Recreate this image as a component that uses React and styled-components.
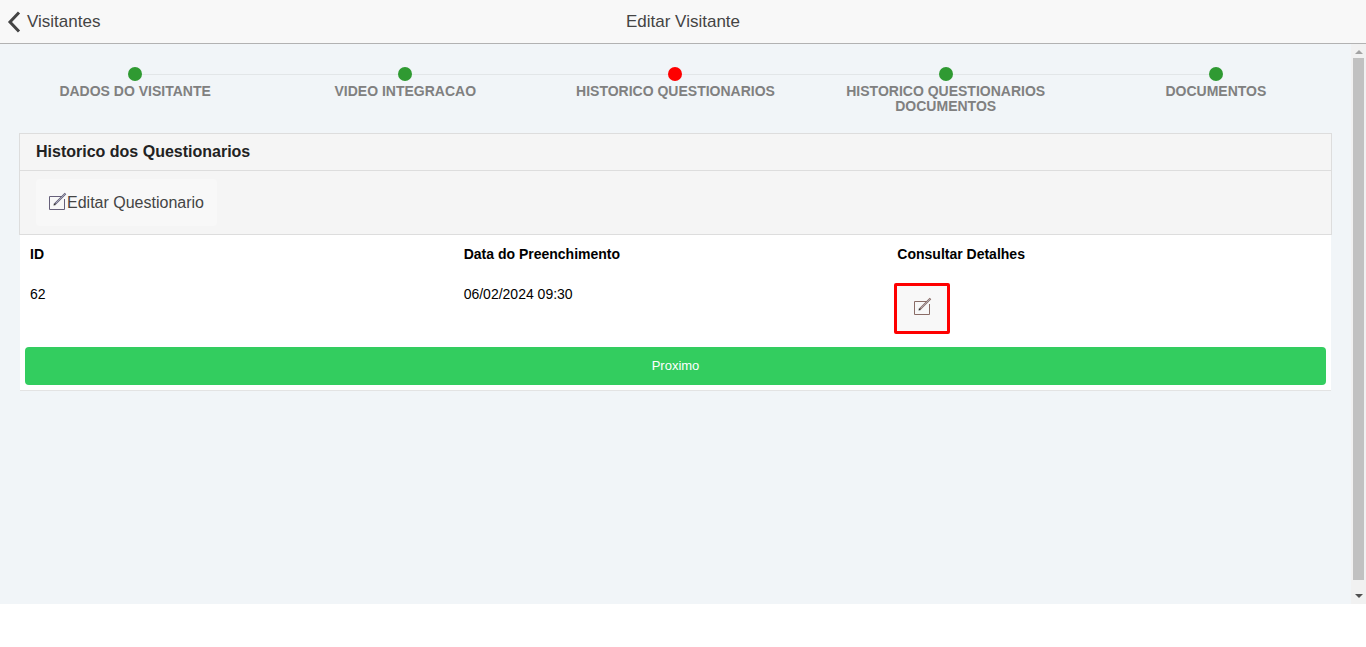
import React from "react";
import styled, { createGlobalStyle } from "styled-components";

const GlobalStyle = createGlobalStyle`
  html, body {
    margin: 0;
    padding: 0;
    height: 100%;
    background: #fff;
    overflow: hidden;
    font-family: "Liberation Sans", Arial, sans-serif;
  }
`;

const Page = styled.div`
  height: 604px;
  display: flex;
  flex-direction: column;
`;
const NavBar = styled.header`
  flex: none;
  height: 43px;
  display: grid;
  grid-template-columns: 1fr auto 1fr;
  align-items: center;
  background: #f8f8f8;
  border-bottom: 1px solid #b2b2b2;
  color: #444;
`;
const BackLink = styled.a`
  display: flex;
  align-items: center;
  gap: 6px;
  padding-left: 7px;
  font-size: 17px;
`;
const NavTitle = styled.div`
  font-size: 17px;
`;
const Body = styled.div`
  flex: 1;
  min-height: 0;
  display: flex;
`;
const Content = styled.main`
  flex: 1;
  min-width: 0;
  background: #f1f5f8;
`;
const ScrollBar = styled.div`
  flex: none;
  width: 15px;
  display: flex;
  flex-direction: column;
  align-items: center;
  background: #f1f1f1;
`;
const ScrollArrow = styled.div`
  flex: none;
  height: 14px;
  display: flex;
  align-items: center;
  justify-content: center;
`;
const ArrowUp = styled.span`
  margin-top: 1px;
  border-left: 4px solid transparent;
  border-right: 4px solid transparent;
  border-bottom: 4px solid #a3a3a3;
`;
const ArrowDown = styled.span`
  margin-top: -2px;
  border-left: 4px solid transparent;
  border-right: 4px solid transparent;
  border-top: 4px solid #505050;
`;
const ScrollThumb = styled.div`
  flex: none;
  width: 11px;
  height: 522px;
  background: #c1c1c1;
`;
const ScrollTrack = styled.div`
  flex: 1;
`;
const Steps = styled.ol`
  display: grid;
  grid-template-columns: repeat(5, 1fr);
  list-style: none;
  margin: 0;
  padding: 23px 0 0;
  height: 66px;
`;
const Step = styled.li`
  position: relative;
  display: flex;
  flex-direction: column;
  align-items: center;
  text-align: center;
  font-size: 14px;
  line-height: 15px;
  font-weight: bold;
  color: #808080;

  &:not(:last-child)::after {
    content: "";
    position: absolute;
    top: 7px;
    left: 50%;
    width: 100%;
    height: 1px;
    background: #e2e6e8;
  }
`;
const Dot = styled.span`
  position: relative;
  z-index: 1;
  width: 14px;
  height: 14px;
  margin-bottom: 3px;
  border-radius: 50%;
  background: ${(p) => (p.$current ? "#fe0000" : "#2f9a32")};
`;
const StepLabel = styled.span`
  width: 230px;
`;
const Panel = styled.section`
  margin: 0 20px;
  background: #fff;
  border-bottom: 1px solid #e3e3e3;
  height: 258px;
  box-sizing: border-box;
  display: flex;
  flex-direction: column;
`;
const PanelHeading = styled.h3`
  margin: 0 -1px;
  height: 38px;
  padding-left: 16px;
  display: flex;
  align-items: center;
  box-sizing: border-box;
  background: #f5f5f5;
  border: 1px solid #ddd;
  color: #222;
  font-size: 16px;
  font-weight: bold;
`;
const Toolbar = styled.div`
  margin: 0 -1px;
  height: 64px;
  padding: 8px 16px;
  box-sizing: border-box;
  background: #f5f5f5;
  border: 1px solid #ddd;
  border-top: 0;
`;
const ToolButton = styled.button`
  display: flex;
  align-items: center;
  width: 181px;
  height: 47px;
  padding: 0 0 0 12px;
  box-sizing: border-box;
  border: 0;
  border-radius: 4px;
  background: #f8f8f8;
  color: #444;
  font-family: inherit;
  font-size: 16px;
`;
const Table = styled.div`
  padding: 0 5px;
  display: grid;
  grid-template-columns: repeat(3, 1fr);
  font-size: 14px;
  color: #000;
`;
const HeadCell = styled.div`
  padding: 11px 5px 0;
  height: 37px;
  box-sizing: border-box;
  font-weight: bold;
  line-height: 16px;
`;
const Cell = styled.div`
  padding: 14px 5px 0;
  height: 75px;
  box-sizing: border-box;
  line-height: 16px;
`;
const ActionCell = styled(Cell)`
  padding: 11px 0 0 2px;
`;
const DetailButton = styled.button`
  width: 56px;
  height: 51px;
  padding: 0 0 2px;
  display: flex;
  align-items: center;
  justify-content: center;
  box-sizing: border-box;
  border: 3px solid #fe0000;
  border-radius: 2px;
  background: #f8f8f8;
`;
const NextButton = styled.button`
  display: block;
  margin: 0 5px;
  height: 38px;
  padding: 0 0 2px;
  border: 0;
  border-radius: 4px;
  background: #33cd5f;
  color: #fff;
  font-family: inherit;
  font-size: 13px;
`;
const IconSvg = styled.svg`
  flex: none;
  margin-bottom: 2px;
`;

const steps = [
  { label: "DADOS DO VISITANTE" },
  { label: "VIDEO INTEGRACAO" },
  { label: "HISTORICO QUESTIONARIOS", current: true },
  { label: "HISTORICO QUESTIONARIOS DOCUMENTOS" },
  { label: "DOCUMENTOS" },
];

const ComposeIcon = ({ color = "#66607a" }) => (
  <IconSvg width="19" height="19" viewBox="0 0 19 19" fill="none">
    <path d="M14 4.5H1.5V17.5H16.5V7" stroke={color} strokeWidth="1" />
    <path d="M7 12L17.5 1.5" stroke={color} strokeWidth="2.2" />
    <path d="M8 11L17 2" stroke="#b9c2cc" strokeWidth="0.7" />
    <path d="M5.5 13.5L6 11L8 13Z" fill="#333" />
  </IconSvg>
);

const App = () => {
  return (
    <Page>
      <GlobalStyle />
      <NavBar>
        <BackLink>
          <svg width="14" height="22" viewBox="0 0 14 22" fill="none">
            <path d="M12 1.5L3 11L12 20.5" stroke="#444" strokeWidth="3" />
          </svg>
          Visitantes
        </BackLink>
        <NavTitle>Editar Visitante</NavTitle>
        <div />
      </NavBar>
      <Body>
        <Content>
          <Steps>
            {steps.map((step) => (
              <Step key={step.label}>
                <Dot $current={step.current} />
                <StepLabel>{step.label}</StepLabel>
              </Step>
            ))}
          </Steps>
          <Panel>
            <PanelHeading>Historico dos Questionarios</PanelHeading>
            <Toolbar>
              <ToolButton>
                <ComposeIcon />
                Editar Questionario
              </ToolButton>
            </Toolbar>
            <Table>
              <HeadCell>ID</HeadCell>
              <HeadCell>Data do Preenchimento</HeadCell>
              <HeadCell>Consultar Detalhes</HeadCell>
              <Cell>62</Cell>
              <Cell>06/02/2024 09:30</Cell>
              <ActionCell>
                <DetailButton>
                  <ComposeIcon color="#8a6c66" />
                </DetailButton>
              </ActionCell>
            </Table>
            <NextButton>Proximo</NextButton>
          </Panel>
        </Content>
        <ScrollBar>
          <ScrollArrow>
            <ArrowUp />
          </ScrollArrow>
          <ScrollThumb />
          <ScrollTrack />
          <ScrollArrow>
            <ArrowDown />
          </ScrollArrow>
        </ScrollBar>
      </Body>
    </Page>
  );
};

export default App;
